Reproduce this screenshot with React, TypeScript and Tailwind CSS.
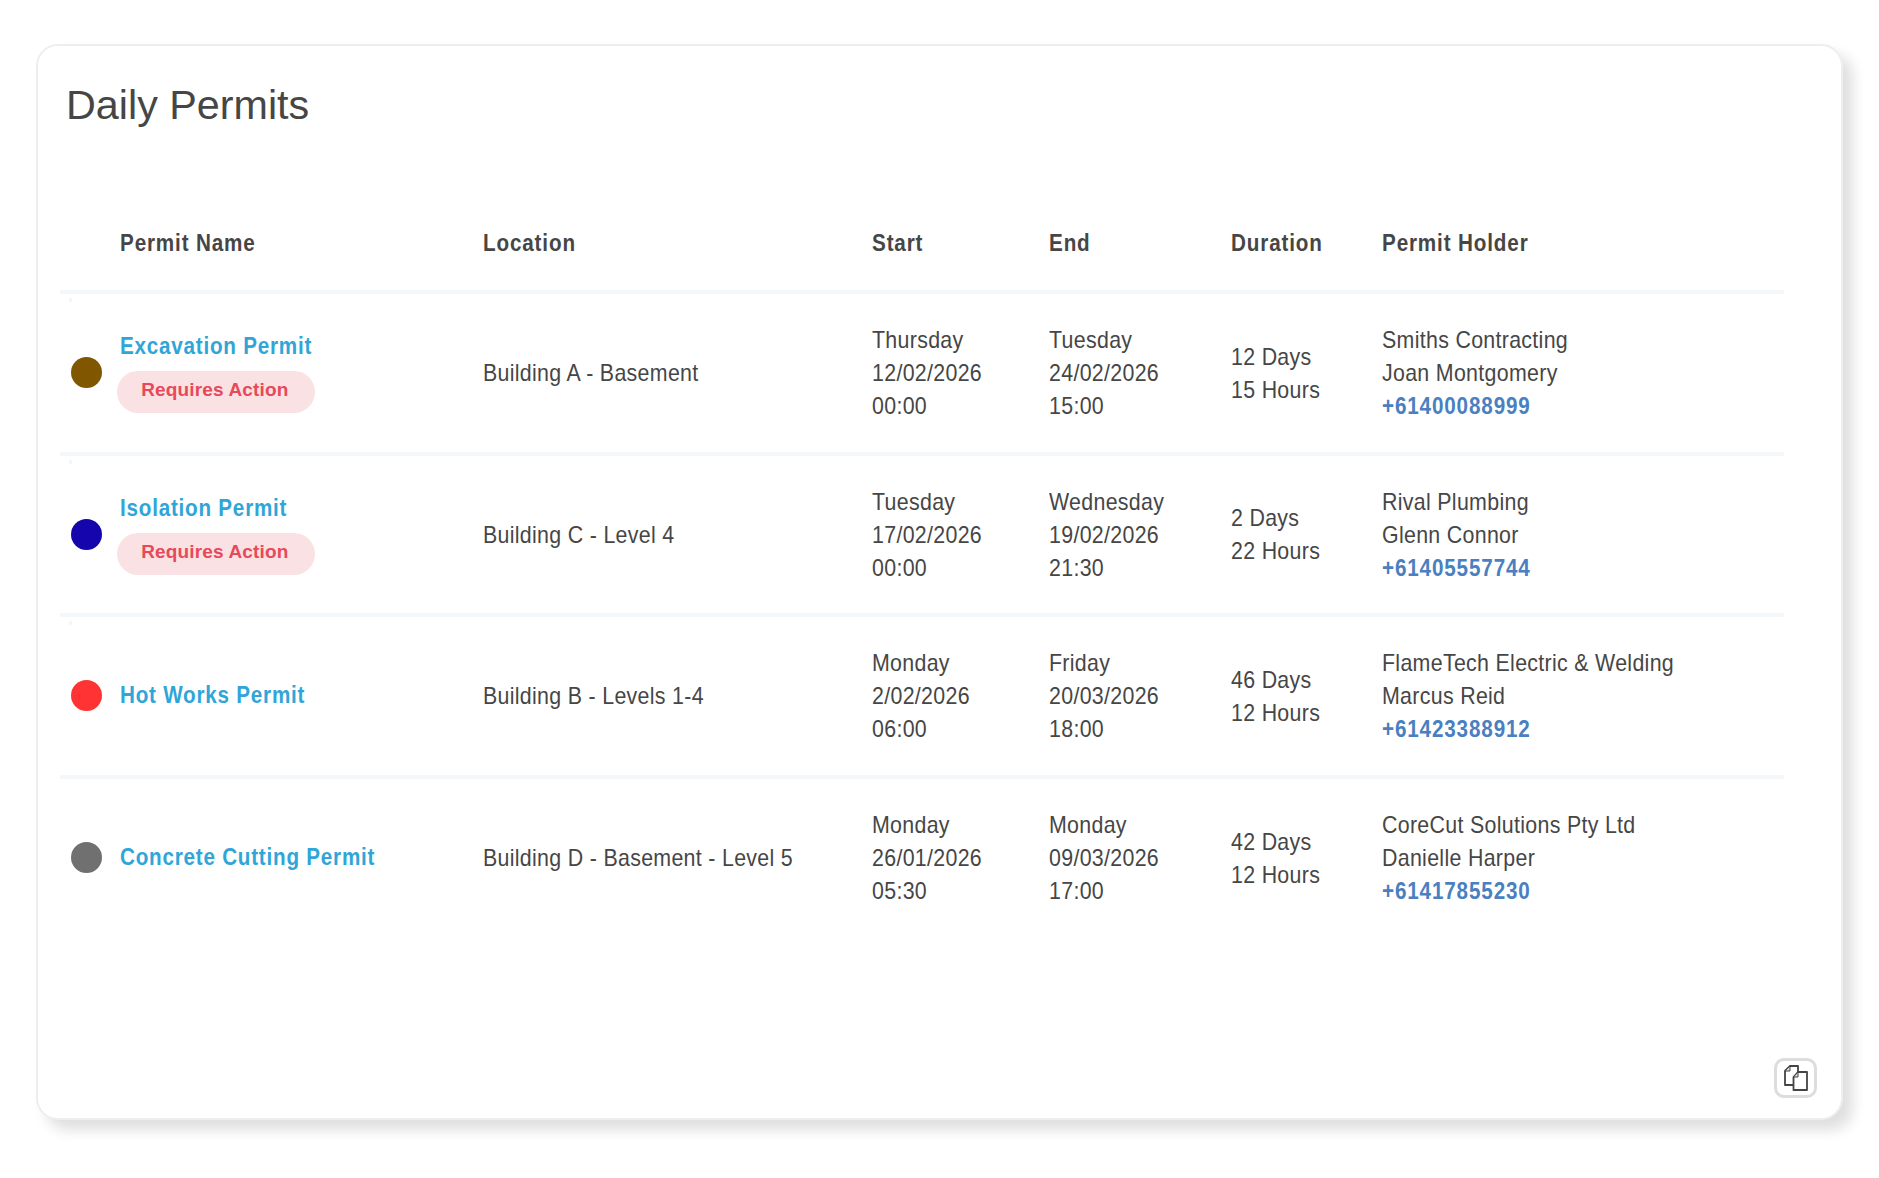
const rows = [
  { dot: "bg-[#805700]", name: "Excavation Permit", action: true, loc: "Building A - Basement", start: ["Thursday", "12/02/2026", "00:00"], end: ["Tuesday", "24/02/2026", "15:00"], dur: ["12 Days", "15 Hours"], holder: ["Smiths Contracting", "Joan Montgomery"], phone: "+61400088999", speck: true },
  { dot: "bg-[#1405ad]", name: "Isolation Permit", action: true, loc: "Building C - Level 4", start: ["Tuesday", "17/02/2026", "00:00"], end: ["Wednesday", "19/02/2026", "21:30"], dur: ["2 Days", "22 Hours"], holder: ["Rival Plumbing", "Glenn Connor"], phone: "+61405557744", speck: true },
  { dot: "bg-[#ff3333]", name: "Hot Works Permit", action: false, loc: "Building B - Levels 1-4", start: ["Monday", "2/02/2026", "06:00"], end: ["Friday", "20/03/2026", "18:00"], dur: ["46 Days", "12 Hours"], holder: ["FlameTech Electric & Welding", "Marcus Reid"], phone: "+61423388912", speck: true },
  { dot: "bg-[#707070]", name: "Concrete Cutting Permit", action: false, loc: "Building D - Basement - Level 5", start: ["Monday", "26/01/2026", "05:30"], end: ["Monday", "09/03/2026", "17:00"], dur: ["42 Days", "12 Hours"], holder: ["CoreCut Solutions Pty Ltd", "Danielle Harper"], phone: "+61417855230", speck: false },
];

const cols = "grid grid-cols-[60.3px_362.7px_389px_177px_182px_151px_1fr] items-center";

function Narrow({ children, bold }: { children: React.ReactNode; bold?: boolean }) {
  return (
    <div className={`origin-left whitespace-nowrap ${bold ? "scale-x-[0.86] font-bold tracking-[1px]" : "scale-x-[0.89] tracking-[0.35px]"}`}>
      {children}
    </div>
  );
}

function Lines({ items }: { items: string[] }) {
  return <div>{items.map((t) => <Narrow key={t}>{t}</Narrow>)}</div>;
}

export default function App() {
  return (
    <div className="w-[1879px] h-[1178px] bg-white pt-[44px] pl-[36px] overflow-hidden">
      <div className="w-[1807px] h-[1076px] bg-white border-2 border-[#eeeeee] rounded-[22px] shadow-[10px_10px_14px_rgba(0,0,0,0.13)] pl-[22px] pr-[57px] pb-[20px] flex flex-col">
        <h1 className="font-['Liberation_Sans',sans-serif] text-[41.3px] leading-[48px] text-[#464646] mt-[35px] ml-[6px] font-normal">Daily Permits</h1>
        <div className="font-['Liberation_Sans',sans-serif] text-[24px] leading-[33px] text-[#464646] mt-[69px]">
          <div className={`${cols} h-[96px] border-b-4 border-[#f5f8fb] pb-[4px]`}>
            <div />
            <Narrow bold>Permit Name</Narrow>
            <Narrow bold>Location</Narrow>
            <Narrow bold>Start</Narrow>
            <Narrow bold>End</Narrow>
            <Narrow bold>Duration</Narrow>
            <Narrow bold>Permit Holder</Narrow>
          </div>
          {rows.map((r, i) => (
            <div key={r.name} className={`${cols} relative h-[161.6px] border-b-4 ${i < 3 ? "border-[#f5f8fb]" : "border-transparent"}`}>
              {r.speck && <span className="absolute left-[9px] top-[4px] w-[3px] h-[4px] bg-[#f6f6f6]" />}
              <div className={`${r.dot} w-[31px] h-[31px] rounded-full ml-[11px]`} />
              <div className="pb-[3px]">
                <div className="text-[#2fa5d8] [&>div]:tracking-[0.9px]"><Narrow bold>{r.name}</Narrow></div>
                {r.action && (
                  <div className="font-bold tracking-[0.15px] text-[19px] leading-[38px] text-[#e8495a] bg-[#fae1e3] rounded-full w-[198px] h-[42px] text-center pr-[3px] -ml-[3px] mt-[9px]">Requires Action</div>
                )}
              </div>
              <Narrow>{r.loc}</Narrow>
              <Lines items={r.start} />
              <Lines items={r.end} />
              <Lines items={r.dur} />
              <div>
                <Lines items={r.holder} />
                <div className="text-[#4a7fc1]"><Narrow bold>{r.phone}</Narrow></div>
              </div>
            </div>
          ))}
        </div>
        <button className="mt-auto self-end w-[43px] h-[40px] border-[3px] border-[#dddddd] rounded-[10px] flex items-center justify-center bg-white -mr-[33px]">
          <svg width="24" height="26" viewBox="0 0 24 26" fill="none" stroke="#444444" strokeWidth="1.8" strokeLinejoin="round">
            <path d="M9 20H1V6L6 1H14V7" />
            <path d="M6 1V6H1Z" fill="#dddddd" strokeWidth="1" />
            <path d="M14 7H23V25H9.5V12Z" fill="#ffffff" />
            <path d="M14 7V12H9.5Z" fill="#dddddd" strokeWidth="1" />
          </svg>
        </button>
      </div>
    </div>
  );
}
